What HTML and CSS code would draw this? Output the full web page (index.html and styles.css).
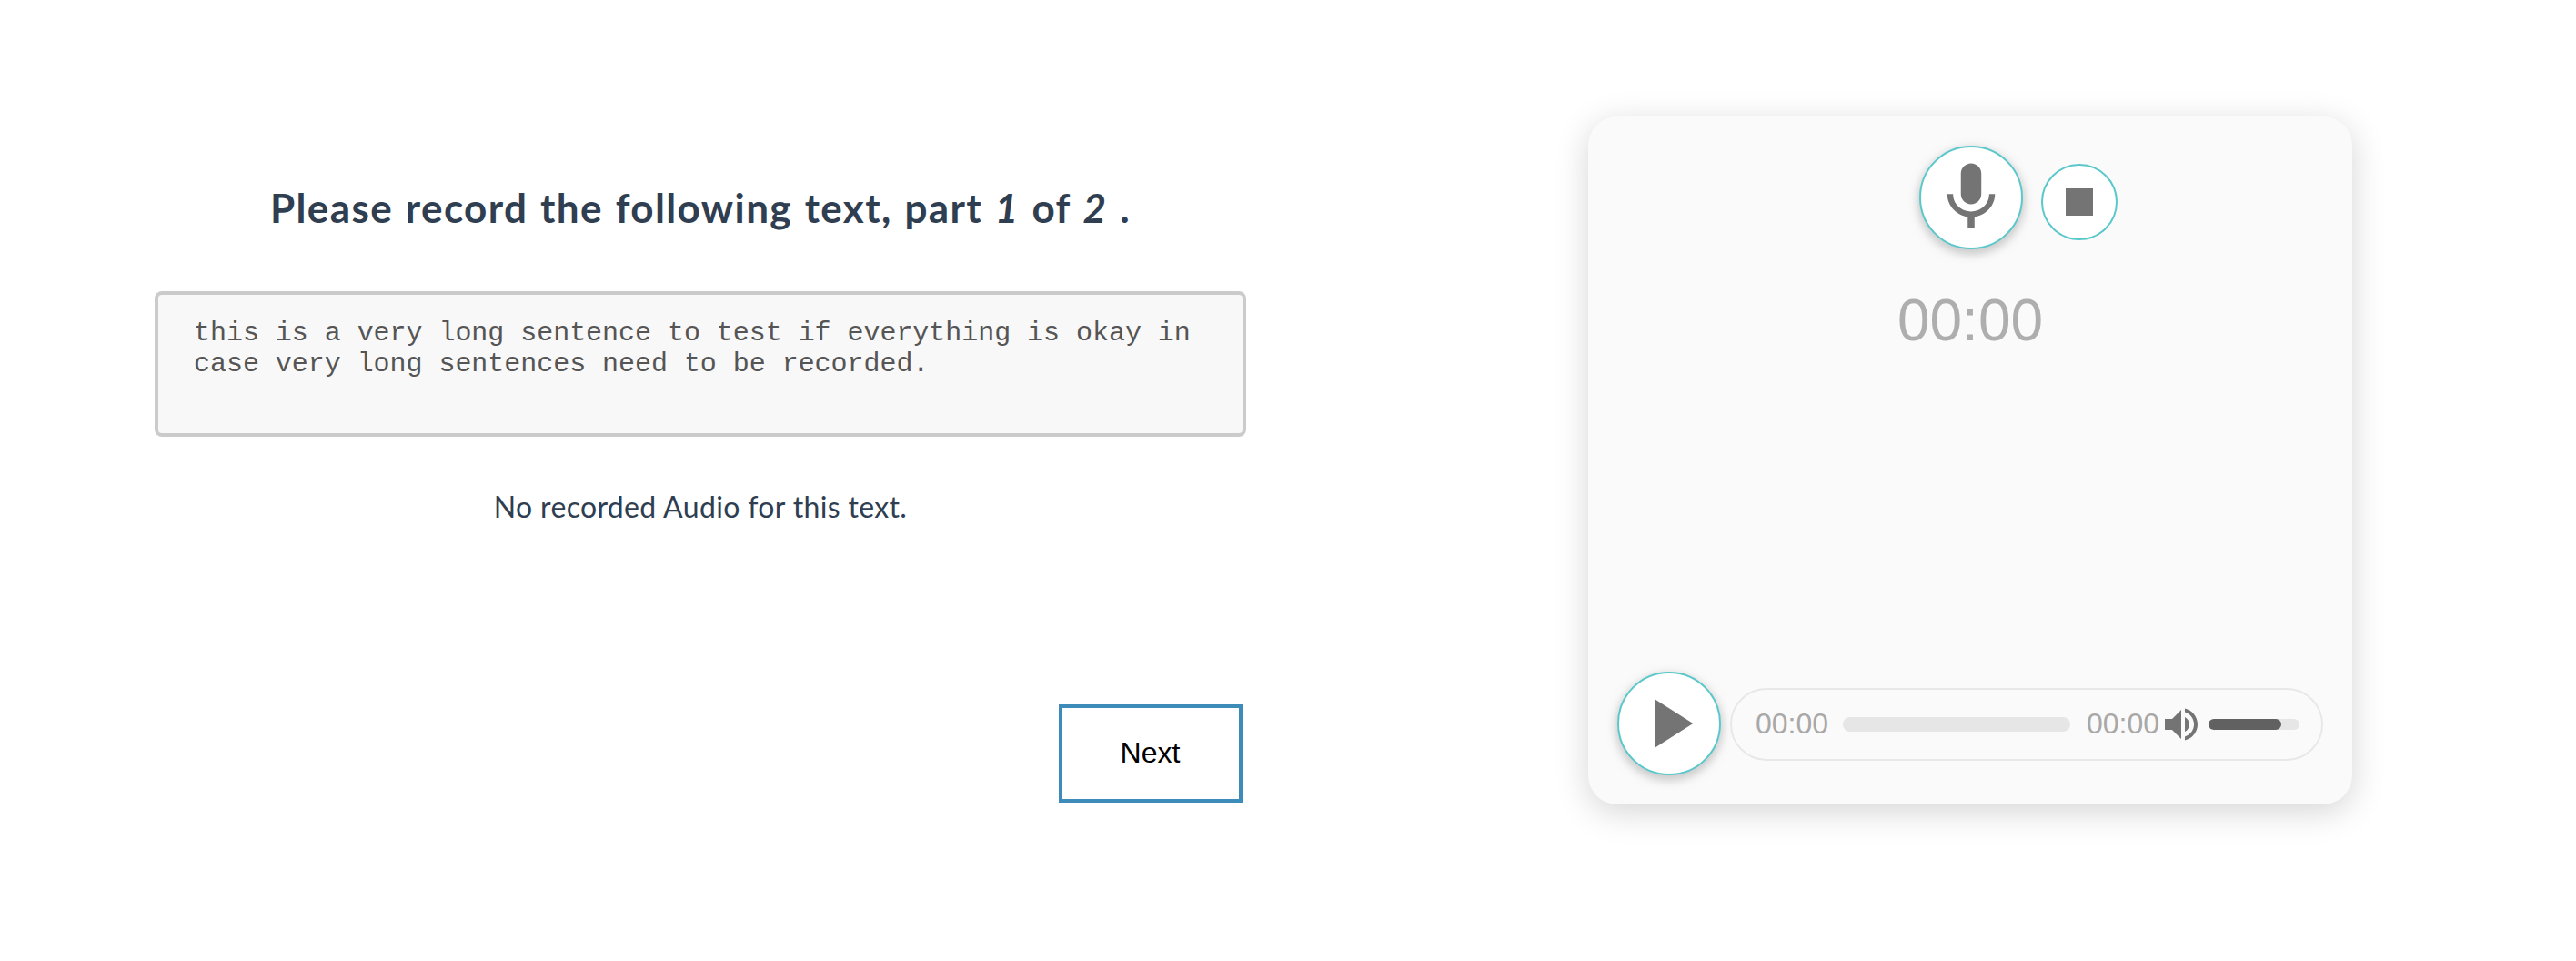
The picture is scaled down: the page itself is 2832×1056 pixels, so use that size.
FILE: index.html
```html
<!DOCTYPE html>
<html lang="en">
<head>
<meta charset="utf-8">
<title>Audio recorder</title>
<link rel="stylesheet" href="styles.css">
</head>
<body>
<main class="page">
  <section class="prompt">
    <h2 class="prompt-title">Please record the following text, part <i>1</i> of <i>2</i> .</h2>
    <div class="prompt-text">this is a very long sentence to test if everything is okay in case very long sentences need to be recorded.</div>
    <p class="prompt-status">No recorded Audio for this text.</p>
    <button class="next" type="button">Next</button>
  </section>
  <section class="recorder">
    <div class="controls">
      <button class="round round-lg" type="button" aria-label="Record">
        <svg class="icon-lg" viewBox="0 0 24 24"><path d="M12 14c1.66 0 2.99-1.34 2.99-3L15 5c0-1.66-1.34-3-3-3S9 3.34 9 5v6c0 1.66 1.34 3 3 3zm5.3-3c0 3-2.54 5.1-5.3 5.1S6.7 14 6.7 11H5c0 3.41 2.72 6.23 6 6.72V21h2v-3.28c3.28-.48 6-3.3 6-6.72h-1.7z"/></svg>
      </button>
      <button class="round round-sm" type="button" aria-label="Stop">
        <svg class="icon-sm" viewBox="0 0 24 24"><path d="M6 6h12v12H6z"/></svg>
      </button>
    </div>
    <div class="timer">00:00</div>
    <div class="player">
      <button class="round round-lg" type="button" aria-label="Play">
        <svg class="icon-lg" viewBox="0 0 24 24"><path d="M8 5v14l11-7z"/></svg>
      </button>
      <div class="player-bar">
        <span class="time">00:00</span>
        <div class="progress"></div>
        <span class="time">00:00</span>
        <svg class="icon-volume" viewBox="0 0 24 24"><path d="M3 9v6h4l5 5V4L7 9H3zm13.5 3c0-1.77-1.02-3.29-2.5-4.03v8.05c1.48-.73 2.5-2.25 2.5-4.02zM14 3.23v2.06c2.89.86 5 3.54 5 6.71s-2.11 5.85-5 6.71v2.06c4.01-.91 7-4.49 7-8.77s-2.99-7.86-7-8.77z"/></svg>
        <div class="volume"><div class="volume-level" style="width: 80%"></div></div>
      </div>
    </div>
  </section>
</main>
</body>
</html>
```
FILE: styles.css
```css
* { box-sizing: border-box; }

body {
  margin: 0;
  background: #fff;
  color: #2f3e50;
  font-family: Lato, "Liberation Sans", sans-serif;
}

.page {
  display: flex;
  align-items: flex-start;
  gap: 376px;
  height: 1056px;
  padding: 128px 0 0 170px;
  overflow: hidden;
}

.prompt {
  display: flex;
  flex-direction: column;
  width: 1200px;
  padding-top: 72px;
}

.prompt-title {
  margin: 0;
  height: 120px;
  font-size: 44px;
  font-weight: 700;
  line-height: 56px;
  letter-spacing: 1.4px;
  word-spacing: 1.6px;
  text-align: center;
  white-space: nowrap;
}

.prompt-text {
  height: 160px;
  padding: 25px 34px 0 39px;
  border: 4px solid #cbcbcb;
  border-radius: 8px;
  background: #f8f8f8;
  color: #555;
  font: 30px/34px "Liberation Mono", monospace;
  letter-spacing: -0.04px;
}

.prompt-status {
  margin: 57px 0 0;
  font-size: 32px;
  line-height: 40px;
  letter-spacing: 0.35px;
  text-align: center;
  white-space: nowrap;
}

.next {
  align-self: flex-end;
  width: 202px;
  height: 108px;
  margin: 197px 4px 0 0;
  padding: 0 1px 2px 0;
  border: 4px solid #3c8bb8;
  background: #fff;
  color: #000;
  font: 32px "Liberation Sans", sans-serif;
}

.recorder {
  display: flex;
  flex-direction: column;
  width: 840px;
  height: 756px;
  padding: 32px;
  border-radius: 32px;
  background: #fafafa;
  box-shadow: 0 8px 36px rgba(0, 0, 0, 0.17);
  font-family: "Liberation Sans", Arial, sans-serif;
}

.controls {
  display: flex;
  align-items: center;
  gap: 20px;
  padding-left: 332px;
}

.round {
  display: flex;
  flex: none;
  align-items: center;
  justify-content: center;
  padding: 0;
  border: 2px solid #5ac8cb;
  border-radius: 50%;
  background: #fff;
}

.round-lg {
  width: 114px;
  height: 114px;
  box-shadow: 0 4px 10px 2px rgba(158, 158, 158, 0.5);
}

.round-sm {
  width: 84px;
  height: 84px;
  margin-top: 10px;
}

svg { flex: none; fill: #747474; }
.icon-lg { width: 90px; height: 90px; }
.icon-sm { width: 60px; height: 60px; }
.icon-volume { width: 48px; height: 48px; }

.timer {
  margin-top: 42px;
  color: #aeaeae;
  font-size: 64px;
  line-height: 72px;
  text-align: center;
}

.player {
  display: flex;
  align-items: center;
  gap: 10px;
  margin-top: auto;
}

.player-bar {
  display: flex;
  align-items: center;
  width: 652px;
  height: 80px;
  margin-top: 2px;
  padding-left: 26px;
  border: 2px solid #e8e8e8;
  border-radius: 40px;
}

.time {
  width: 80px;
  padding-bottom: 2px;
  color: #a8a8a8;
  font-size: 32px;
  line-height: 36px;
}

.progress {
  width: 250px;
  height: 16px;
  margin: 0 18px 0 16px;
  border-radius: 8px;
  background: #e6e6e6;
}

.volume {
  width: 100px;
  height: 12px;
  margin-left: 6px;
  border-radius: 6px;
  background: #e6e6e6;
}

.volume-level {
  height: 100%;
  border-radius: 6px;
  background: #616161;
}
```
